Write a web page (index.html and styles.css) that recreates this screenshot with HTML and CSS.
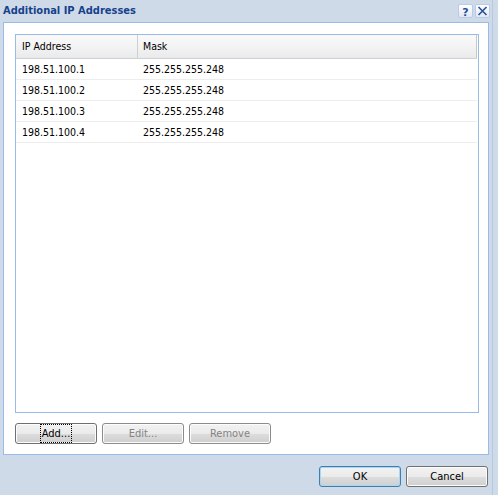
FILE: index.html
```html
<!DOCTYPE html>
<html>
<head>
<meta charset="utf-8">
<link rel="stylesheet" href="styles.css">
</head>
<body>
<div class="window">
  <div class="titlebar">
    <span class="title">Additional IP Addresses</span>
    <div class="tools">
      <span class="tool">
        <svg width="15" height="14" viewBox="0 0 15 14"><text x="7.5" y="11.5" text-anchor="middle" class="qmark">?</text></svg>
      </span>
      <span class="tool">
        <svg width="15" height="14" viewBox="0 0 15 14"><path d="M3.5 3 L11.5 11 M11.5 3 L3.5 11" stroke="#2a4f94" stroke-width="1.6" fill="none"/></svg>
      </span>
    </div>
  </div>
  <div class="panel">
    <div class="grid">
      <div class="ghead">
        <div class="hc c1">IP Address</div>
        <div class="hc c2">Mask</div>
      </div>
      <div class="grow"><div class="gc c1">198.51.100.1</div><div class="gc c2">255.255.255.248</div></div>
      <div class="grow"><div class="gc c1">198.51.100.2</div><div class="gc c2">255.255.255.248</div></div>
      <div class="grow"><div class="gc c1">198.51.100.3</div><div class="gc c2">255.255.255.248</div></div>
      <div class="grow"><div class="gc c1">198.51.100.4</div><div class="gc c2">255.255.255.248</div></div>
    </div>
    <div class="actions">
      <button class="btn"><span class="focus">Add...</span></button>
      <button class="btn disabled">Edit...</button>
      <button class="btn disabled">Remove</button>
    </div>
  </div>
  <div class="footer">
    <button class="btn default">OK</button>
    <button class="btn">Cancel</button>
  </div>
</div>
</body>
</html>
```

FILE: styles.css
```css
html, body {
  margin: 0;
  padding: 0;
  background: #cfdae9;
}
body {
  width: 498px;
  height: 495px;
  overflow: hidden;
  font-family: "DejaVu Sans Condensed", "DejaVu Sans", sans-serif;
  font-size: 10.5px;
  color: #000;
}
.window {
  width: 493px;
  height: 495px;
  border-right: 1px solid #b7c8e0;
  box-sizing: border-box;
  padding-left: 3px;
}
.titlebar {
  height: 22px;
  display: flex;
  align-items: flex-start;
  justify-content: space-between;
}
.title {
  font-weight: bold;
  font-size: 11px;
  color: #15428b;
  padding-top: 4px;
}
.tools {
  display: flex;
  gap: 2px;
  padding-top: 4px;
  padding-right: 2px;
}
.tool {
  display: block;
  width: 15px;
  height: 14px;
  box-sizing: border-box;
  border: 1px solid #b8cbe8;
  border-radius: 2px;
  background: linear-gradient(#ffffff, #dfe8f5);
  line-height: 0;
}
.tool svg { margin: -1px 0 0 -1px; }
.qmark {
  font-family: "DejaVu Sans", sans-serif;
  font-weight: bold;
  font-size: 11px;
  fill: #2a4f94;
}
.panel {
  width: 486px;
  height: 433px;
  box-sizing: border-box;
  border: 1px solid #99bbe8;
  background: #fff;
  padding: 11px 9px 10px 11px;
}
.grid {
  height: 379px;
  box-sizing: border-box;
  border: 1px solid #99bbe8;
  width: 464px;
}
.ghead {
  display: flex;
  height: 24px;
  box-sizing: border-box;
  border-bottom: 1px solid #d0d0d0;
  background: linear-gradient(#f9f9f9 0%, #f5f5f5 40%, #e9eaec 100%);
  margin-right: 1px;
}
.hc {
  line-height: 23px;
  box-sizing: border-box;
}
.hc.c1 {
  width: 122px;
  padding-left: 6px;
  border-right: 1px solid #d0d0d0;
}
.hc.c2 {
  flex: 1;
  padding-left: 5px;
  border-right: 1px solid #c8c8c8;
}
.grow {
  display: flex;
  height: 21px;
  box-sizing: border-box;
  border-bottom: 1px solid #ededed;
  margin-right: 1px;
}
.gc {
  line-height: 20px;
  box-sizing: border-box;
}
.gc.c1 { width: 122px; padding-left: 6px; }
.gc.c2 { flex: 1; padding-left: 5px; }
.actions {
  display: flex;
  gap: 5px;
  margin-top: 10px;
}
.btn {
  width: 82px;
  height: 21px;
  box-sizing: border-box;
  border: 1px solid #707070;
  border-radius: 3px;
  background: linear-gradient(#f2f2f2 0%, #ebebeb 50%, #dddddd 51%, #cfcfcf 100%);
  box-shadow: inset 0 0 0 1px #fcfcfc;
  font-family: "DejaVu Sans Condensed", "DejaVu Sans", sans-serif;
  font-size: 11px;
  color: #000;
  padding: 0;
  display: flex;
  align-items: center;
  justify-content: center;
}
.btn.disabled {
  color: #838383;
  border-color: #8c8c8c;
}
.btn.default {
  border-color: #3c7fb1;
  box-shadow: inset 0 0 0 1px #a9d7f3;
}
.focus {
  outline: 1px dotted #000;
  padding: 2px 1px;
  line-height: 13px;
}
.footer {
  display: flex;
  justify-content: flex-end;
  gap: 5px;
  padding-top: 11px;
  padding-right: 4px;
}
```
